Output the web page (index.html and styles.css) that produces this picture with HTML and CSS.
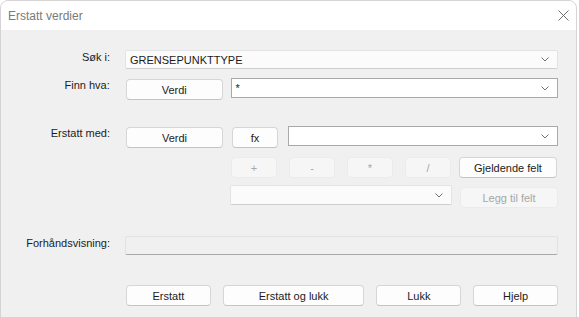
FILE: index.html
```html
<!DOCTYPE html>
<html lang="no">
<head>
    <meta charset="UTF-8">
    <title>Erstatt verdier</title>
    <link rel="stylesheet" href="styles.css">
</head>
<body>
    <div class="window">
        <div class="titlebar">
            <span class="title">Erstatt verdier</span>
            <svg class="close" width="11" height="11" viewBox="0 0 11 11">
                <path d="M0.5 0.5 L10.5 10.5 M10.5 0.5 L0.5 10.5" stroke="#6f6f6f" stroke-width="1" fill="none"/>
            </svg>
        </div>

        <div class="content">
            <!-- Søk i -->
            <div class="row row-search">
                <label class="label">Søk i:</label>
                <div class="combo combo-flat w-search">
                    <span>GRENSEPUNKTTYPE</span>
                    <svg class="chev" width="8" height="5" viewBox="0 0 8 5"><polyline points="0.5,0.5 4,4 7.5,0.5" fill="none" stroke="#707070"/></svg>
                </div>
            </div>

            <!-- Finn hva -->
            <div class="row row-find">
                <label class="label">Finn hva:</label>
                <button class="btn w-verdi nudge">Verdi</button>
                <div class="combo combo-edit w-find">
                    <span>*</span>
                    <svg class="chev" width="8" height="5" viewBox="0 0 8 5"><polyline points="0.5,0.5 4,4 7.5,0.5" fill="none" stroke="#707070"/></svg>
                </div>
            </div>

            <!-- Erstatt med -->
            <div class="row row-replace">
                <label class="label">Erstatt med:</label>
                <button class="btn w-verdi nudge">Verdi</button>
                <button class="btn w-op fx nudge">fx</button>
                <div class="combo combo-edit w-replace">
                    <span></span>
                    <svg class="chev" width="8" height="5" viewBox="0 0 8 5"><polyline points="0.5,0.5 4,4 7.5,0.5" fill="none" stroke="#707070"/></svg>
                </div>
            </div>

            <div class="row row-ops">
                <div class="ops">
                    <button class="btn w-op" disabled>+</button>
                    <button class="btn w-op" disabled>-</button>
                    <button class="btn w-op" disabled>*</button>
                    <button class="btn w-op" disabled>/</button>
                </div>
                <button class="btn w-field">Gjeldende felt</button>
            </div>

            <div class="row row-fields">
                <div class="combo combo-flat w-fields">
                    <span></span>
                    <svg class="chev" width="8" height="5" viewBox="0 0 8 5"><polyline points="0.5,0.5 4,4 7.5,0.5" fill="none" stroke="#707070"/></svg>
                </div>
                <button class="btn w-field nudge2" disabled>Legg til felt</button>
            </div>

            <!-- Forhåndsvisning -->
            <div class="row row-preview">
                <label class="label">Forhåndsvisning:</label>
                <div class="preview"></div>
            </div>

            <div class="row row-actions">
                <button class="btn w-act">Erstatt</button>
                <button class="btn w-act-wide">Erstatt og lukk</button>
                <button class="btn w-act">Lukk</button>
                <button class="btn w-act">Hjelp</button>
            </div>
        </div>
    </div>
</body>
</html>
```

FILE: styles.css
```css
body {
    margin: 0;
    background: #ffffff;
    font-family: "Liberation Sans", Arial, sans-serif;
    font-size: 11px;
    color: #1b1b1b;
}
.window {
    width: 577px;
    height: 330px;
    box-sizing: border-box;
    border: 1px solid #d4d4d4;
    border-radius: 8px 8px 0 0;
    background: #f0f0f0;
    overflow: hidden;
}
.titlebar {
    height: 29px;
    background: #ffffff;
    display: flex;
    align-items: center;
    justify-content: space-between;
    padding: 0 7px 0 7px;
}
.title {
    font-size: 12px;
    color: #7a7a7a;
}
.close {
    margin-right: 0;
}
.content {
    padding: 20px 18px 0 0;
    display: flex;
    flex-direction: column;
}
.row {
    display: flex;
    align-items: flex-start;
}
.label {
    width: 109px;
    margin-right: 15px;
    text-align: right;
    padding-top: 1px;
    color: #1b1b1b;
}
.row-find { margin-top: 9px; }
.row-replace { margin-top: 26px; }
.row-ops { margin-top: 9px; padding-left: 230px; }
.row-fields { margin-top: 7px; padding-left: 229px; }
.row-preview { margin-top: 28px; }
.row-actions { margin-top: 30px; padding-left: 125px; gap: 12px; }

.combo {
    box-sizing: border-box;
    height: 19px;
    display: flex;
    align-items: center;
    justify-content: space-between;
    padding: 0 8px 0 4px;
}
.combo-flat {
    background: #fbfbfb;
    border: 1px solid #e3e3e3;
    border-bottom-color: #cfcfcf;
    border-radius: 2px;
}
.combo-edit {
    background: #ffffff;
    border: 1px solid #a9a9a9;
    height: 20px;
}
.chev {
    flex: none;
}
.w-search { width: 433px; }
.w-find { width: 328px; margin-left: 8px; }
.w-replace { width: 270px; margin-left: 10px; }
.w-fields { width: 222px; height: 20px; }

.btn {
    box-sizing: border-box;
    height: 21px;
    padding: 0;
    background: #fdfdfd;
    border: 1px solid #d6d6d6;
    border-bottom-color: #c4c4c4;
    border-radius: 4px;
    font-family: "Liberation Sans", Arial, sans-serif;
    font-size: 11px;
    color: #1b1b1b;
}
.btn:disabled {
    background: #f6f6f6;
    border-color: #ebebeb;
    color: #a6a6a6;
}
.nudge { margin-top: 1px; }
.nudge2 { margin-top: 2px; }
.w-verdi { width: 97px; margin-left: 1px; }
.w-op { width: 46px; }
.fx { margin-left: 9px; }
.ops {
    display: flex;
    gap: 12px;
}
.w-field { width: 98px; margin-left: 8px; }
.w-act { width: 85px; }
.w-act-wide { width: 142px; }
.preview {
    box-sizing: border-box;
    width: 433px;
    height: 19px;
    background: #f0f0f0;
    border: 1px solid #e2e2e2;
    border-bottom-color: #a8a8a8;
    border-radius: 2px;
}
```
